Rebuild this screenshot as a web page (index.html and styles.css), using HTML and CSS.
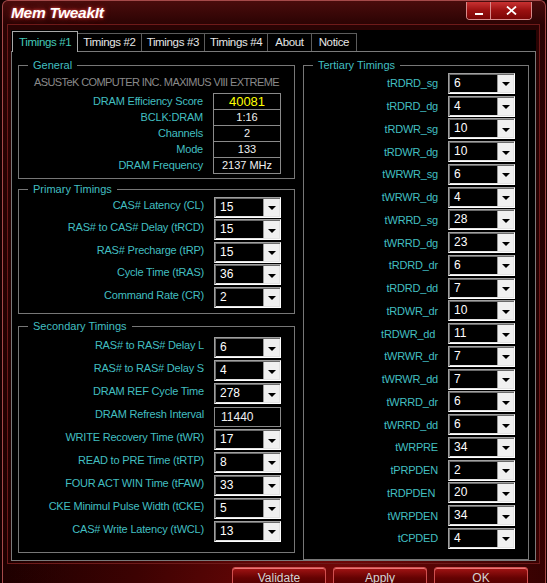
FILE: index.html
```html
<!DOCTYPE html>
<html lang="en">
<head>
    <meta charset="UTF-8">
    <title>Mem TweakIt</title>
    <link rel="stylesheet" href="styles.css">
</head>
<body>
<div class="window">
    <!-- Title bar -->
    <div class="titlebar">
        <span class="title">Mem TweakIt</span>
        <div class="caption-buttons">
            <span class="cap-btn minimize"><i></i></span>
            <span class="cap-btn close">
                <svg width="11" height="9" viewBox="0 0 11 9"><path d="M1 0.5 L10 8.5 M10 0.5 L1 8.5" stroke="#fff" stroke-width="1.8"/></svg>
            </span>
        </div>
    </div>

    <div class="frame">
        <div class="tab-control">
            <div class="tabs">
                <span class="tab active">Timings #1</span>
                <span class="tab">Timings #2</span>
                <span class="tab">Timings #3</span>
                <span class="tab">Timings #4</span>
                <span class="tab short">About</span>
                <span class="tab short">Notice</span>
            </div>

            <div class="tab-panel">
                <div class="col-left">
                    <!-- General -->
                    <fieldset class="group general">
                        <legend>General</legend>
                        <p class="board">ASUSTeK COMPUTER INC. MAXIMUS VIII EXTREME</p>
                        <div class="rows">
                            <span class="lbl">DRAM Efficiency Score</span><span class="value score">40081</span>
                            <span class="lbl">BCLK:DRAM</span><span class="value">1:16</span>
                            <span class="lbl">Channels</span><span class="value">2</span>
                            <span class="lbl">Mode</span><span class="value">133</span>
                            <span class="lbl">DRAM Frequency</span><span class="value">2137 MHz</span>
                        </div>
                    </fieldset>

                    <!-- Primary -->
                    <fieldset class="group primary">
                        <legend>Primary Timings</legend>
                        <div class="rows">
                            <span class="lbl">CAS# Latency (CL)</span><div class="combo"><span>15</span><i class="drop"></i></div>
                            <span class="lbl">RAS# to CAS# Delay (tRCD)</span><div class="combo"><span>15</span><i class="drop"></i></div>
                            <span class="lbl">RAS# Precharge (tRP)</span><div class="combo"><span>15</span><i class="drop"></i></div>
                            <span class="lbl">Cycle Time (tRAS)</span><div class="combo"><span>36</span><i class="drop"></i></div>
                            <span class="lbl">Command Rate (CR)</span><div class="combo"><span>2</span><i class="drop"></i></div>
                        </div>
                    </fieldset>

                    <!-- Secondary -->
                    <fieldset class="group secondary">
                        <legend>Secondary Timings</legend>
                        <div class="rows">
                            <span class="lbl">RAS# to RAS# Delay L</span><div class="combo"><span>6</span><i class="drop"></i></div>
                            <span class="lbl">RAS# to RAS# Delay S</span><div class="combo"><span>4</span><i class="drop"></i></div>
                            <span class="lbl">DRAM REF Cycle Time</span><div class="combo"><span>278</span><i class="drop"></i></div>
                            <span class="lbl">DRAM Refresh Interval</span><div class="textbox">11440</div>
                            <span class="lbl">WRITE Recovery Time (tWR)</span><div class="combo"><span>17</span><i class="drop"></i></div>
                            <span class="lbl">READ to PRE Time (tRTP)</span><div class="combo"><span>8</span><i class="drop"></i></div>
                            <span class="lbl">FOUR ACT WIN Time (tFAW)</span><div class="combo"><span>33</span><i class="drop"></i></div>
                            <span class="lbl">CKE Minimul Pulse Width (tCKE)</span><div class="combo"><span>5</span><i class="drop"></i></div>
                            <span class="lbl">CAS# Write Latency (tWCL)</span><div class="combo"><span>13</span><i class="drop"></i></div>
                        </div>
                    </fieldset>
                </div>

                <!-- Tertiary -->
                <fieldset class="group tertiary">
                    <legend>Tertiary Timings</legend>
                    <div class="rows">
                        <span class="lbl">tRDRD_sg</span><div class="combo"><span>6</span><i class="drop"></i></div>
                        <span class="lbl">tRDRD_dg</span><div class="combo"><span>4</span><i class="drop"></i></div>
                        <span class="lbl">tRDWR_sg</span><div class="combo"><span>10</span><i class="drop"></i></div>
                        <span class="lbl">tRDWR_dg</span><div class="combo"><span>10</span><i class="drop"></i></div>
                        <span class="lbl">tWRWR_sg</span><div class="combo"><span>6</span><i class="drop"></i></div>
                        <span class="lbl">tWRWR_dg</span><div class="combo"><span>4</span><i class="drop"></i></div>
                        <span class="lbl">tWRRD_sg</span><div class="combo"><span>28</span><i class="drop"></i></div>
                        <span class="lbl">tWRRD_dg</span><div class="combo"><span>23</span><i class="drop"></i></div>
                        <span class="lbl">tRDRD_dr</span><div class="combo"><span>6</span><i class="drop"></i></div>
                        <span class="lbl">tRDRD_dd</span><div class="combo"><span>7</span><i class="drop"></i></div>
                        <span class="lbl">tRDWR_dr</span><div class="combo"><span>10</span><i class="drop"></i></div>
                        <span class="lbl">tRDWR_dd&nbsp;</span><div class="combo"><span>11</span><i class="drop"></i></div>
                        <span class="lbl">tWRWR_dr</span><div class="combo"><span>7</span><i class="drop"></i></div>
                        <span class="lbl">tWRWR_dd</span><div class="combo"><span>7</span><i class="drop"></i></div>
                        <span class="lbl">tWRRD_dr</span><div class="combo"><span>6</span><i class="drop"></i></div>
                        <span class="lbl">tWRRD_dd</span><div class="combo"><span>6</span><i class="drop"></i></div>
                        <span class="lbl">tWRPRE</span><div class="combo"><span>34</span><i class="drop"></i></div>
                        <span class="lbl">tPRPDEN</span><div class="combo"><span>2</span><i class="drop"></i></div>
                        <span class="lbl">tRDPDEN&nbsp;</span><div class="combo"><span>20</span><i class="drop"></i></div>
                        <span class="lbl">tWRPDEN</span><div class="combo"><span>34</span><i class="drop"></i></div>
                        <span class="lbl">tCPDED</span><div class="combo"><span>4</span><i class="drop"></i></div>
                    </div>
                </fieldset>
            </div>
        </div>
    </div>

    <!-- Bottom buttons -->
    <div class="actions">
        <button>Validate</button>
        <button>Apply</button>
        <button>OK</button>
    </div>
</div>
</body>
</html>
```

FILE: styles.css
```css
* {
    margin: 0;
    padding: 0;
    box-sizing: border-box;
}

html, body {
    height: 100%;
    overflow: hidden;
}

body {
    background: #140000;
    font-family: "Liberation Sans", Arial, sans-serif;
    font-size: 11px;
    color: #fff;
}

.window {
    height: 600px;
    margin: 0 1px 0 2px;
    border: 1px solid #a54a4a;
    border-bottom: none;
    border-radius: 6px 6px 0 0;
    background:
        radial-gradient(ellipse 60% 45% at 60% 100%, #7c0808 0%, #3c0202 60%, transparent 100%),
        linear-gradient(#4a0c0c 0px, #2a0303 24px, #1e0000 100%);
}

/* Title bar */
.titlebar {
    height: 23px;
    display: flex;
    justify-content: space-between;
    align-items: flex-start;
    padding-left: 8px;
}

.title {
    font-weight: bold;
    font-style: italic;
    font-size: 15.5px;
    letter-spacing: -0.3px;
    line-height: 20px;
    padding-top: 2px;
    color: #fff;
    text-shadow: 0 0 3px #e04848, 0 0 6px #a02020;
}

.caption-buttons {
    display: flex;
    margin: 1px 13px 0 0;
    border: 1px solid #d88a8a;
    border-top: none;
    border-radius: 0 0 4px 4px;
    overflow: hidden;
}

.cap-btn {
    height: 17px;
    display: flex;
    align-items: center;
    justify-content: center;
    background: linear-gradient(#c83232, #9a1010 50%, #7a0606);
}

.minimize {
    width: 24px;
    border-right: 1px solid #d88a8a;
}

.minimize i {
    width: 8px;
    height: 2px;
    background: #fff;
    margin-top: 7px;
}

.close {
    width: 40px;
}

/* Inner frame */
.frame {
    margin: 0 5px 0 4px;
    border: 1px solid #6e1a1a;
    padding: 5px 3px 2px 3px;
}

.tab-control {
    background: #000;
}

.tabs {
    height: 21px;
    display: flex;
    align-items: flex-end;
    padding-left: 1px;
}

.tab {
    height: 18px;
    padding: 0 5px;
    border: 1px solid #5c5c5c;
    border-bottom: none;
    margin-left: -1px;
    font-size: 11.5px;
    line-height: 17px;
    color: #e6e6e6;
    letter-spacing: -0.35px;
}

.tab.short {
    padding: 0 7px;
}

.tab.active {
    height: 21px;
    margin-left: 0;
    margin-bottom: -1px;
    padding: 0 6px;
    line-height: 21px;
    border-color: #a8a8a8;
    background: #000;
    color: #45c8b8;
    position: relative;
    z-index: 1;
}

.tab-panel {
    height: 510px;
    border: 1px solid #7a7a7a;
    display: flex;
    gap: 8px;
    padding: 7px 6px 0 6px;
}

.col-left {
    width: 277px;
    display: flex;
    flex-direction: column;
}

/* Group boxes */
.group {
    border: 1px solid #777;
    min-width: 0;
    padding: 0 13px 0 0;
}

.group legend {
    margin-left: 9px;
    padding: 0 5px;
    font-size: 11px;
    line-height: 13px;
    color: #42bfc0;
}

.rows {
    display: grid;
    grid-template-columns: 1fr 67px;
    column-gap: 10px;
    align-items: center;
}

.lbl {
    text-align: right;
    white-space: nowrap;
    color: #42bfc0;
    letter-spacing: -0.2px;
}

.primary .lbl,
.secondary .lbl {
    margin-bottom: 5px;
}

.general {
    padding-bottom: 5px;
}

.general .board {
    padding-top: 2px;
    line-height: 16px;
    text-align: center;
    color: #8a8a8a;
    margin: 0 -13px 3px 0;
    letter-spacing: -0.6px;
}

.general .rows {
    grid-template-columns: 1fr 68px;
    grid-auto-rows: 16px;
    align-items: start;
}

.general .lbl {
    line-height: 17px;
}

.value {
    height: 17px;
    border: 1px solid #8a8a8a;
    text-align: center;
    line-height: 15px;
    color: #f0f0f0;
}

.value.score {
    color: #ffff00;
    font-size: 13px;
}

.primary {
    margin-top: 4px;
    padding-bottom: 4px;
}

.primary .rows {
    grid-auto-rows: 22.5px;
}

.secondary {
    margin-top: 6px;
    padding-top: 4px;
    padding-bottom: 9px;
}

.secondary .rows {
    grid-auto-rows: 22.9px;
}

.tertiary {
    width: 226px;
    padding-bottom: 2px;
}

.tertiary .rows {
    grid-auto-rows: 22.76px;
}

/* Drop-down boxes */
.combo {
    height: 21px;
    display: flex;
    border: 1px solid;
    border-color: #a0a0a0 #fff #fff #a0a0a0;
    box-shadow: inset 1px 1px #6a6a6a, inset -1px -1px #e3e3e3;
    background: #000;
    padding: 1px;
}

.combo span {
    flex: 1;
    padding-left: 4px;
    font-size: 12px;
    line-height: 17px;
    color: #fff;
}

.drop {
    width: 16px;
    background: #f0f0f0;
    border-left: 1px solid #9a9a9a;
    display: flex;
    align-items: center;
    justify-content: center;
    padding-top: 2px;
}

.drop::after {
    content: "";
    border-left: 4px solid transparent;
    border-right: 4px solid transparent;
    border-top: 4px solid #000;
}

.textbox {
    height: 20px;
    border: 1px solid #8a8a8a;
    padding-left: 6px;
    font-size: 12px;
    line-height: 19px;
    color: #f0f0f0;
}

/* Bottom buttons */
.actions {
    display: flex;
    justify-content: flex-end;
    gap: 7px;
    padding: 3px 17px 0 0;
}

.actions button {
    width: 94px;
    height: 24px;
    border: 1px solid #d05050;
    border-radius: 3px 3px 0 0;
    background: linear-gradient(#a41414, #640202 45%, #420000);
    box-shadow: inset 0 1px #e87878;
    color: #d4d4d4;
    font-family: "Liberation Sans", Arial, sans-serif;
    font-size: 12px;
    padding-bottom: 3px;
}
```
